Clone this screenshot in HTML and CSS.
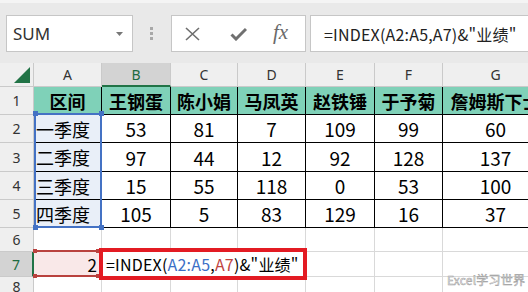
FILE: index.html
```html
<!DOCTYPE html>
<html lang="zh">
<head>
<meta charset="utf-8">
<link rel="stylesheet" href="styles.css">
</head>
<body>
<div class="app">
  <div class="top"></div>
  <div class="fbar">
    <div class="namebox"><span class="nbtext">SUM</span><svg class="arrow" width="7" height="4" viewBox="0 0 7 4"><path d="M0 0H7L3.5 4Z" fill="#777"/></svg></div>
    <div class="grip"><i></i><i></i><i></i></div>
    <div class="fbtns">
      <svg class="ico-x" width="15" height="14" viewBox="0 0 15 14"><path d="M1 1L14 13M14 1L1 13" stroke="#6e6e6e" stroke-width="1.6" fill="none"/></svg>
      <svg class="ico-ok" width="17" height="14" viewBox="0 0 17 14"><path d="M1.5 7.5L6 12L16 2" stroke="#707070" stroke-width="3" fill="none"/></svg>
      <span class="fx">fx</span>
    </div>
    <div class="finput">=INDEX(A2:A5,A7)&amp;"业绩"</div>
  </div>
  <div class="sheet">
    <div class="c h corner"><svg width="16" height="16" viewBox="0 0 16 16"><path d="M16 0V16H0Z" fill="#217346"/></svg></div>
    <div class="c h">A</div><div class="c h sel">B</div><div class="c h">C</div><div class="c h">D</div><div class="c h">E</div><div class="c h">F</div><div class="c h">G</div>

    <div class="c r">1</div>
    <div class="c t th">区间</div><div class="c t th">王钢蛋</div><div class="c t th">陈小娟</div><div class="c t th">马凤英</div><div class="c t th">赵铁锤</div><div class="c t th">于予菊</div><div class="c t th">詹姆斯下士</div>

    <div class="c r">2</div>
    <div class="c t txt hl">一季度</div><div class="c t">53</div><div class="c t">81</div><div class="c t">7</div><div class="c t">109</div><div class="c t">99</div><div class="c t">60</div>

    <div class="c r">3</div>
    <div class="c t txt hl">二季度</div><div class="c t">97</div><div class="c t">44</div><div class="c t">12</div><div class="c t">92</div><div class="c t">128</div><div class="c t">137</div>

    <div class="c r">4</div>
    <div class="c t txt hl">三季度</div><div class="c t">15</div><div class="c t">55</div><div class="c t">118</div><div class="c t">0</div><div class="c t">53</div><div class="c t">100</div>

    <div class="c r">5</div>
    <div class="c t txt hl">四季度</div><div class="c t">105</div><div class="c t">5</div><div class="c t">83</div><div class="c t">129</div><div class="c t">16</div><div class="c t">37</div>

    <div class="c r">6</div>
    <div class="c"></div><div class="c"></div><div class="c"></div><div class="c"></div><div class="c"></div><div class="c"></div><div class="c"></div>

    <div class="c r rsel">7</div>
    <div class="c num ref">2</div>
    <div class="c formula">=INDEX(<span class="blue">A2:A5</span>,<span class="red">A7</span>)&amp;"业绩"</div>
    <div class="c"></div><div class="c"></div><div class="c"></div>

    <div class="c r">8</div>
    <div class="c"></div><div class="c"></div><div class="c"></div><div class="c"></div><div class="c"></div><div class="c"></div><div class="c"></div>
  </div>

  <div class="selbox"></div>
  <div class="hd hd-tl"></div><div class="hd hd-tr"></div><div class="hd hd-bl"></div><div class="hd hd-br"></div>
  <div class="refbox"></div>
  <div class="rd rd-tl"></div><div class="rd rd-tr"></div><div class="rd rd-bl"></div><div class="rd rd-br"></div>
  <div class="mark"></div>
  <div class="wm">Excel学习世界</div>
</div>
</body>
</html>
```
FILE: styles.css
```css
* { box-sizing: border-box; margin: 0; padding: 0; }
body { margin: 0; width: 528px; height: 292px; overflow: hidden; background: #fff; font-family: "Noto Sans CJK SC", "Noto Sans", sans-serif; }
.app { position: relative; width: 528px; height: 292px; overflow: hidden; }
.top { height: 3px; background: #f4f4f4; }
.fbar { height: 60px; background: #e9e9e9; display: flex; align-items: flex-start; padding: 12px 0 0 6px; }
.namebox { width: 127px; height: 37px; background: #fff; border: 1px solid #c6c6c6; display: flex; align-items: center; padding-left: 6px; padding-right: 9px; }
.nbtext { font-family: "Noto Sans", sans-serif; font-size: 17px; color: #333; }
.arrow { margin-left: auto; }
.grip { margin-left: 17px; margin-top: 12px; display: flex; flex-direction: column; gap: 2px; }
.grip i { display: block; width: 3px; height: 3px; background: #a8a8a8; }
.fbtns { margin-left: 18px; width: 135px; height: 37px; background: #fff; border: 1px solid #c6c6c6; display: flex; align-items: center; padding-left: 13px; }
.ico-ok { margin-left: 30px; }
.fx { margin-left: 26px; font-family: "Liberation Serif", serif; font-style: italic; font-size: 21px; color: #6a6a6a; line-height: 1; margin-top: -2px; }
.finput { margin-left: 4px; flex: 1; height: 37px; background: #fff; border: 1px solid #c6c6c6; border-right: none; display: flex; align-items: center; padding-left: 13px; font-size: 16px; letter-spacing: 0.2px; color: #222; white-space: nowrap; }
.sheet { display: grid; width: 549px; grid-template-columns: 34px 68px 69px 67px 68px 69px 68px 106px; grid-template-rows: 24px 28px 28px 29px 28px 28px 24px 25px 20px; }
.c { border-right: 1px solid #d9d9d9; border-bottom: 1px solid #d9d9d9; display: flex; align-items: center; justify-content: center; white-space: nowrap; font-size: 19px; color: #000; }
.h, .r { background: #efefef; border-color: #cacaca; font-family: "Noto Sans", sans-serif; font-size: 14px; color: #333; }
.corner { justify-content: flex-end; align-items: flex-end; padding: 0 3px 3px 0; }
.h.sel { background: #d3d3d3; color: #1e6b41; border-bottom: 2px solid #217346; }
.r.rsel { background: #d3d3d3; color: #1e6b41; border-right: 2px solid #217346; }
.t { border-color: #000; }
.th { background: #7fd1b8; font-weight: bold; font-size: 18px; }
.txt { justify-content: flex-start; padding-left: 2px; font-size: 18px; }
.hl { background: #e9eff8; }
.num { justify-content: flex-end; padding-right: 4px; font-size: 17px; }
.ref { background: #f9e8e8; }
.formula { grid-column: span 3; justify-content: flex-start; padding-left: 4px; font-size: 16px; letter-spacing: 0.2px; overflow: visible; }
.blue { color: #3b6fc6; }
.red { color: #c0443f; }
.selbox { position: absolute; left: 34px; top: 113px; width: 68px; height: 115px; border: 2px solid #4472c4; }
.hd { position: absolute; width: 5px; height: 5px; background: #4472c4; }
.hd-tl { left: 33px; top: 111px; } .hd-tr { left: 99px; top: 111px; }
.hd-bl { left: 33px; top: 225px; } .hd-br { left: 99px; top: 225px; }
.refbox { position: absolute; left: 34px; top: 250px; width: 65px; height: 27px; border-top: 2px solid #b9423e; border-bottom: 2px solid #b9423e; }
.rd { position: absolute; width: 4px; height: 4px; background: #b9423e; }
.rd-tl { left: 33px; top: 249px; } .rd-tr { left: 96px; top: 249px; }
.rd-bl { left: 33px; top: 274px; } .rd-br { left: 96px; top: 274px; }
.mark { position: absolute; left: 99px; top: 248px; width: 208px; height: 32px; border: 4px solid #e31b23; }
.wm { position: absolute; left: 447px; top: 271px; font-size: 12px; color: #f2f2f2; -webkit-text-stroke: 0.5px #9a9a9a; letter-spacing: 0.2px; }
```
